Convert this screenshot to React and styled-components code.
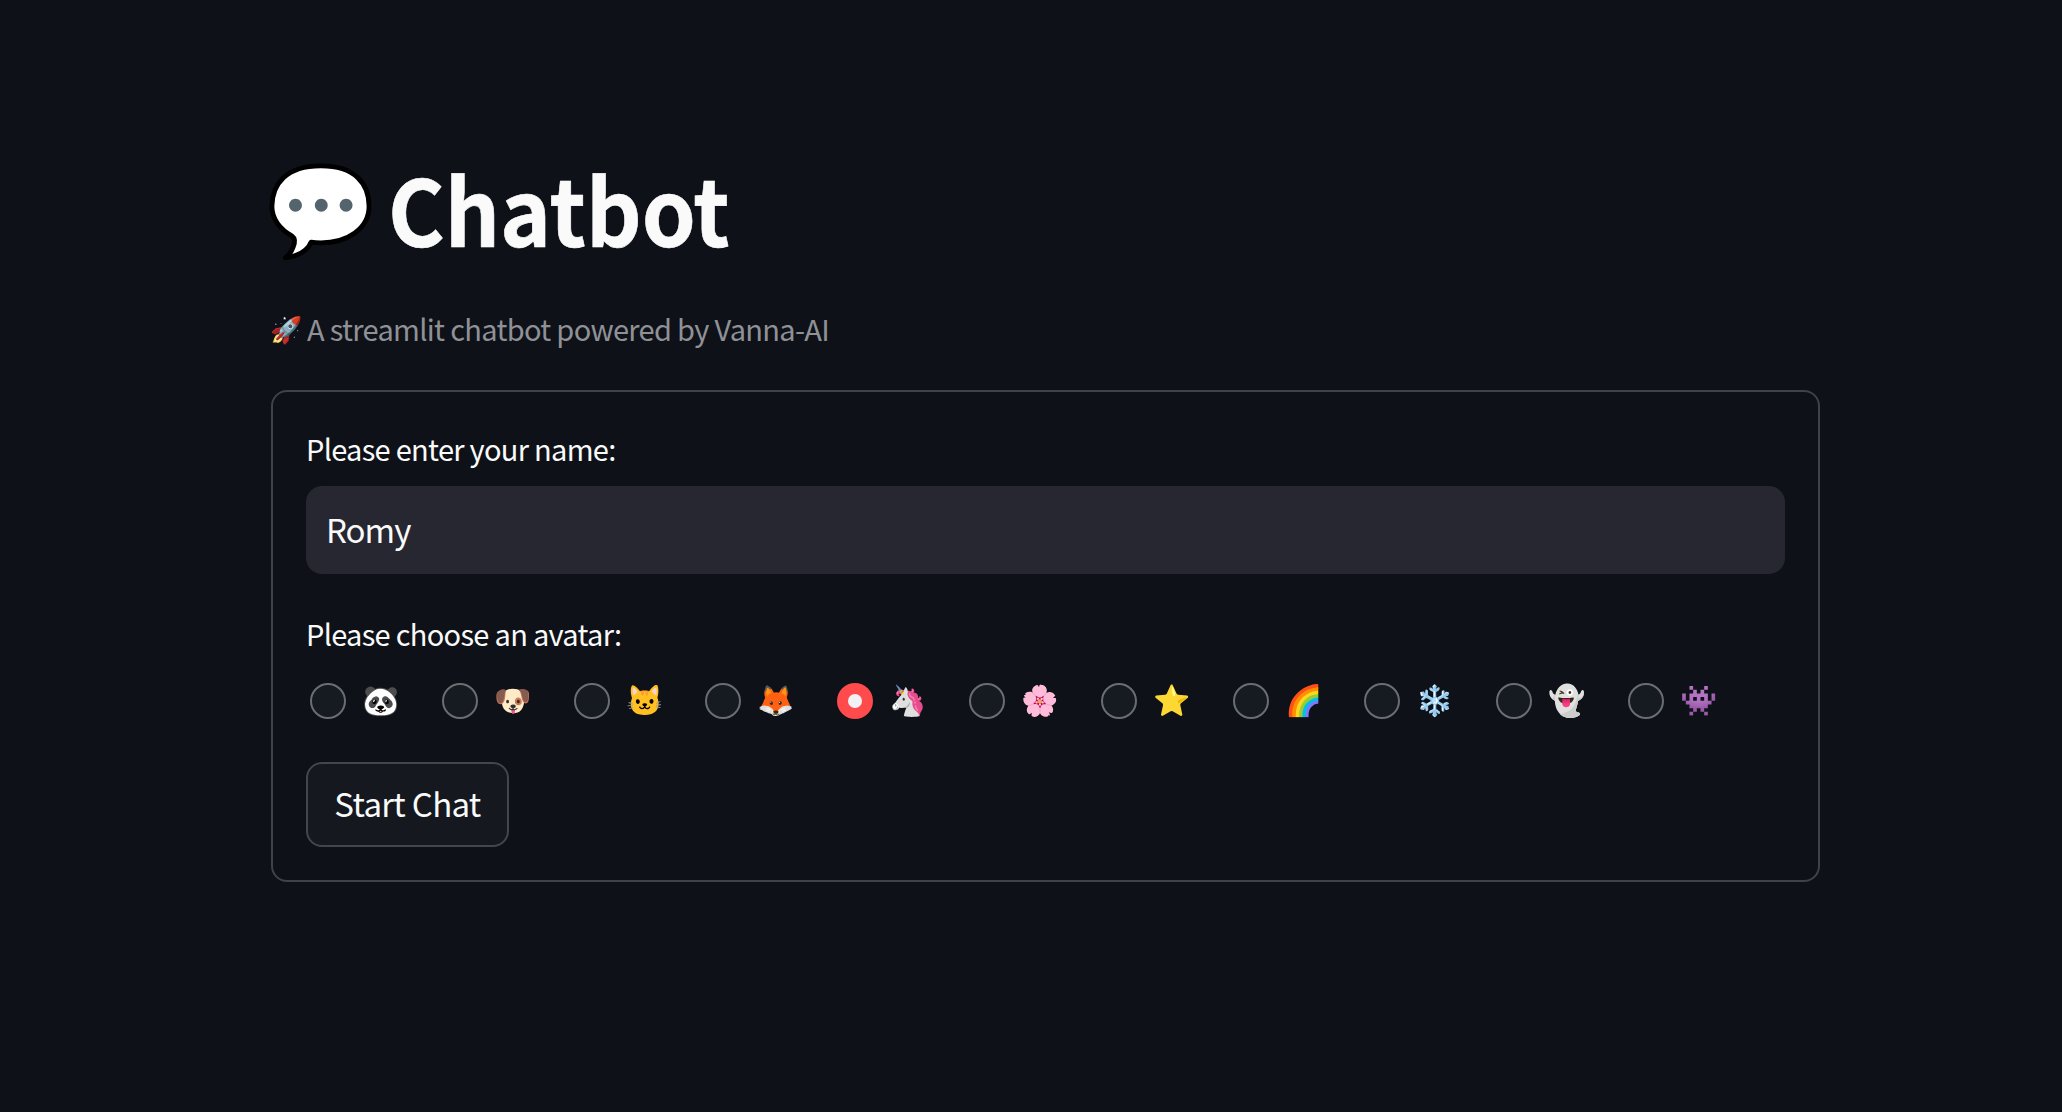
import React from "react";
import styled, { createGlobalStyle } from "styled-components";

const GlobalStyle = createGlobalStyle`
  html, body {
    margin: 0;
    padding: 0;
    background: #0e1117;
  }
  body {
    font-family: "Noto Sans CJK SC", "Noto Sans", sans-serif;
    color: #fafafa;
  }
`;

const Page = styled.main`
  box-sizing: border-box;
  min-height: 1112px;
  padding: 162px 242px 0 271px;
  background: #0e1117;
`;

const Title = styled.h1`
  display: flex;
  align-items: center;
  gap: 12px;
  height: 94px;
  margin: 0;
  font-size: 92px;
  line-height: 94px;
  font-weight: 700;
  color: #fafafa;
`;

const TitleEmoji = styled.span`
  margin-left: -5px;
  font-size: 88px;
  transform: translateY(-6px);
`;

const TitleText = styled.span`
  padding-bottom: 5px;
  transform: scaleX(0.94);
  transform-origin: left center;
  -webkit-text-stroke: 0.6px #fafafa;
`;

const Caption = styled.p`
  display: flex;
  align-items: center;
  gap: 5px;
  height: 40px;
  margin: 52px 0 0;
  font-size: 29px;
  line-height: 40px;
  letter-spacing: -0.68px;
  color: #8f9197;
`;

const CaptionEmoji = styled.span`
  margin-left: -1px;
  font-size: 26px;
  letter-spacing: 0;
`;

const Card = styled.form`
  box-sizing: border-box;
  height: 492px;
  margin-top: 42px;
  padding: 34px 33px;
  border: 2px solid #404247;
  border-radius: 16px;
`;

const Label = styled.label`
  display: block;
  font-size: 29px;
  line-height: 44px;
  letter-spacing: -0.7px;
  color: #fafafa;
`;

const NameInput = styled.input`
  display: block;
  box-sizing: border-box;
  width: 100%;
  height: 88px;
  margin: 16px 0 37px;
  padding: 0 20px 2px;
  border: 0;
  border-radius: 16px;
  outline: none;
  background: #262730;
  color: #fafafa;
  font: inherit;
  font-size: 33px;
  letter-spacing: -1px;
`;

const RadioRow = styled.div`
  display: grid;
  grid-template-columns: repeat(11, 131.8px);
  height: 60px;
  margin-top: 16px;
  align-items: center;
`;

const RadioItem = styled.div`
  display: flex;
  align-items: center;
  gap: 16px;
  padding-left: 4px;
`;

const RadioDot = styled.span`
  display: flex;
  align-items: center;
  justify-content: center;
  box-sizing: border-box;
  width: 36px;
  height: 36px;
  border-radius: 50%;
  border: ${(p) => (p.$checked ? "0" : "2px solid #6b6d71")};
  background: ${(p) => (p.$checked ? "#ff4b4b" : "#161a21")};
  &::after {
    content: "";
    display: ${(p) => (p.$checked ? "block" : "none")};
    width: 14px;
    height: 14px;
    border-radius: 50%;
    background: #f0f2f6;
  }
`;

const Emoji = styled.span`
  margin-bottom: 6px;
  font-size: 30px;
  line-height: 35px;
`;

const StartButton = styled.button`
  display: block;
  box-sizing: border-box;
  width: 203px;
  height: 85px;
  margin-top: 31px;
  padding: 0 0 4px;
  border: 2px solid #44464c;
  border-radius: 16px;
  background: #15181f;
  color: #fafafa;
  font: inherit;
  font-size: 33px;
  letter-spacing: -0.7px;
`;

const avatars = ["🐼", "🐶", "🐱", "🦊", "🦄", "🌸", "⭐", "🌈", "❄️", "👻", "👾"];

const App = () => {
  return (
    <Page>
      <GlobalStyle />
      <Title>
        <TitleEmoji>💬</TitleEmoji>
        <TitleText>Chatbot</TitleText>
      </Title>
      <Caption>
        <CaptionEmoji>🚀</CaptionEmoji>A streamlit chatbot powered by Vanna-AI
      </Caption>
      <Card>
        <Label>Please enter your name:</Label>
        <NameInput defaultValue="Romy" />
        <Label>Please choose an avatar:</Label>
        <RadioRow>
          {avatars.map((a) => (
            <RadioItem key={a}>
              <RadioDot $checked={a === "🦄"} />
              <Emoji>{a}</Emoji>
            </RadioItem>
          ))}
        </RadioRow>
        <StartButton type="button">Start Chat</StartButton>
      </Card>
    </Page>
  );
};

export default App;
